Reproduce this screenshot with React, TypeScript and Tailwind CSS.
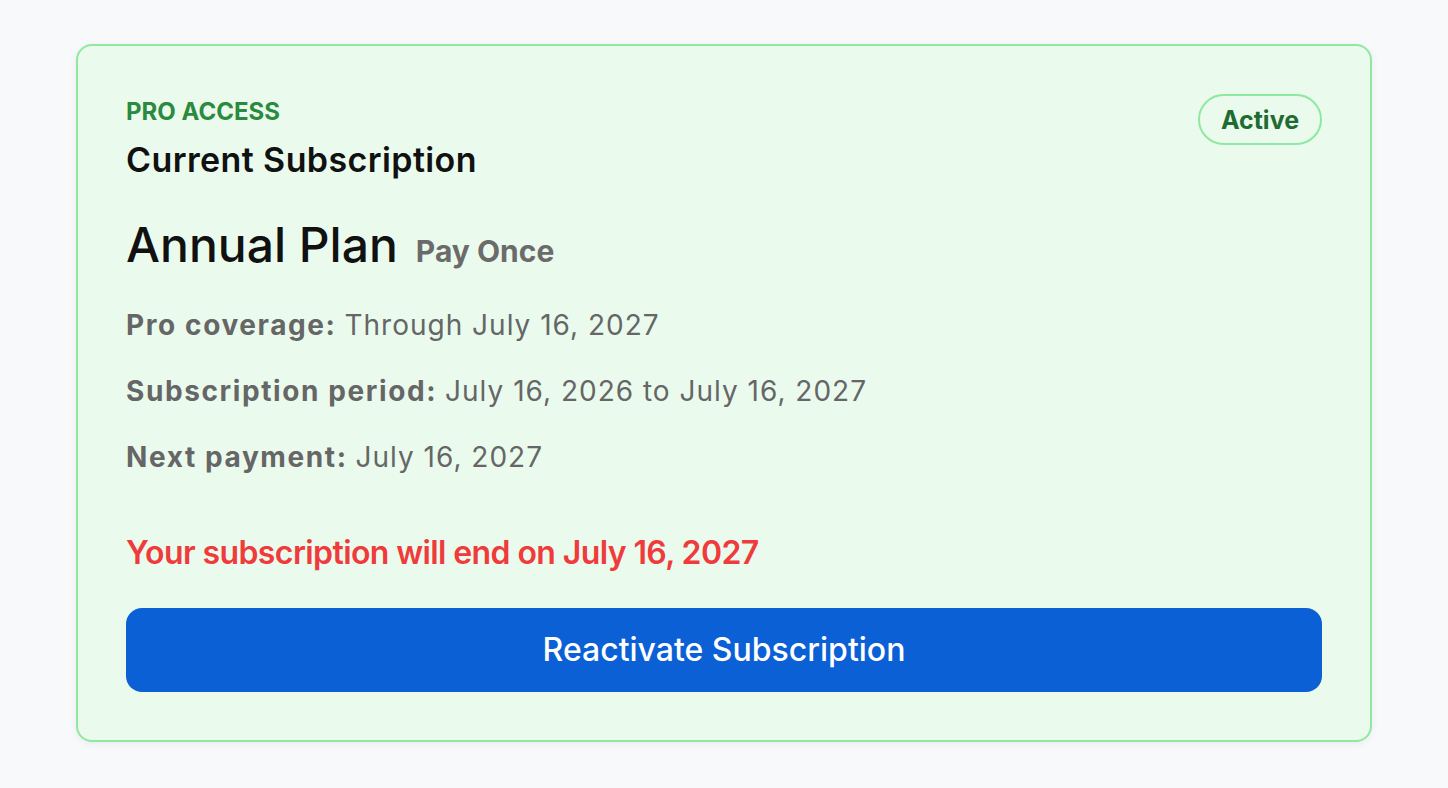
import React from "react";

export default function App() {
  return (
    <div className="min-h-screen w-full bg-[#f8f9fb] font-['Inter',sans-serif] pt-[44px]">
      <div className="mx-auto w-[1296px] rounded-[16px] border-2 border-[#8fe8a0] bg-[#eafbee] p-[48px] shadow-[0_2px_8px_rgba(0,0,0,0.06)]">
        <div className="flex items-start justify-between">
          <div className="flex flex-col">
            <div className="text-[24px] leading-[36px] font-bold text-[#2b8a3e]">PRO ACCESS</div>
            <div className="mt-[8px] text-[34px] leading-[44px] font-semibold tracking-[0.4px] text-[#111111]">Current Subscription</div>
          </div>
          <div className="flex h-[51px] w-[124px] items-center justify-center rounded-full border-2 border-[#8fe8a0] pt-[2px] text-[25px] font-bold text-[#1f6b32]">
            Active
          </div>
        </div>

        <div className="mt-[35px] flex items-baseline gap-[18px]">
          <span className="text-[48px] leading-[56px] font-medium text-[#111111]">Annual Plan</span>
          <span className="text-[30px] leading-[40px] font-bold text-[#6b6b6b]">Pay Once</span>
        </div>

        <div className="mt-[32px] flex flex-col gap-[26px] text-[28px] leading-[40px] text-[#666666]">
          <p>
            <span className="font-bold tracking-[1.6px]">Pro coverage:</span>{" "}
            <span className="tracking-[1px]">Through July 16, 2027</span>
          </p>
          <p>
            <span className="font-bold tracking-[1.6px]">Subscription period:</span>{" "}
            <span className="tracking-[1px]">July 16, 2026 to July 16, 2027</span>
          </p>
          <p>
            <span className="font-bold tracking-[1.6px]">Next payment:</span>{" "}
            <span className="tracking-[1px]">July 16, 2027</span>
          </p>
        </div>

        <div className="mt-[54px] text-[32px] leading-[44px] font-semibold tracking-[-0.6px] text-[#ef3b3b]">
          Your subscription will end on July 16, 2027
        </div>

        <button className="mt-[33px] flex h-[84px] w-full items-center justify-center rounded-[16px] bg-[#0b60d6] text-[32px] font-medium text-white">
          Reactivate Subscription
        </button>
      </div>
    </div>
  );
}
